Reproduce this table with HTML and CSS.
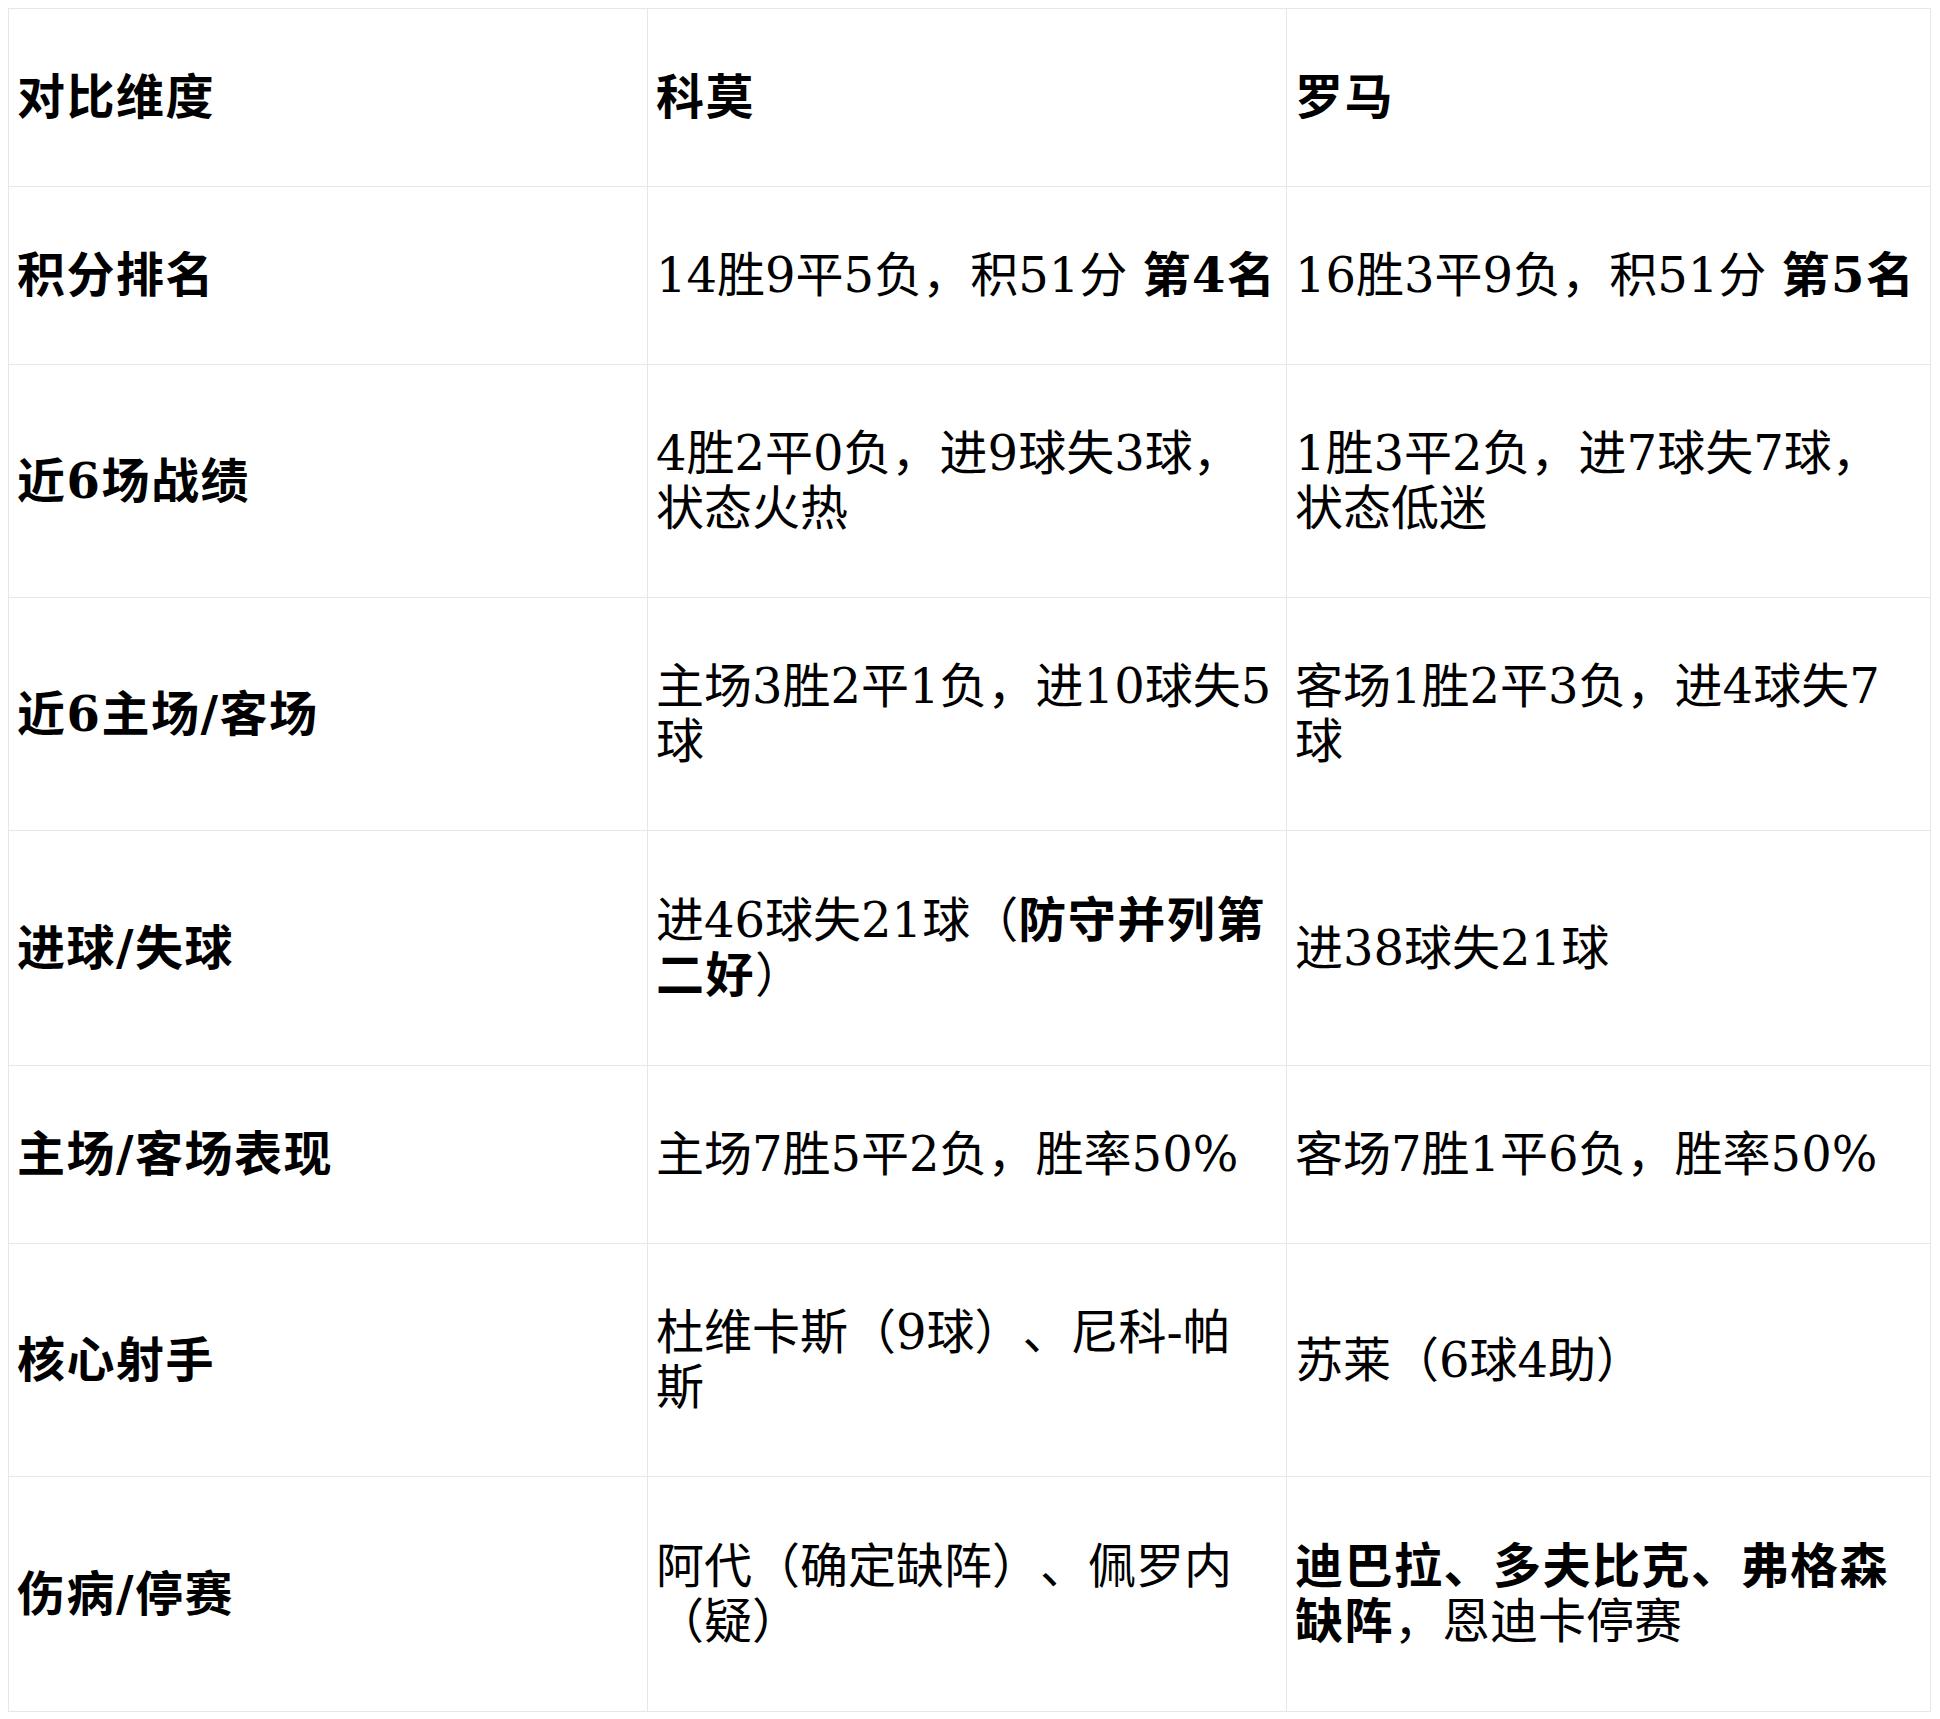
FILE: index.html
```html
<!DOCTYPE html>
<html lang="zh-CN">
<head>
<meta charset="utf-8">
<title>科莫 vs 罗马</title>
<link rel="stylesheet" href="styles.css">
</head>
<body>
<table class="cmp">
  <colgroup>
    <col class="c1">
    <col class="c2">
    <col class="c3">
  </colgroup>
  <thead>
    <tr><th>对比维度</th><th>科莫</th><th>罗马</th></tr>
  </thead>
  <tbody>
    <tr><th>积分排名</th><td>14胜9平5负，积51分 <strong>第4名</strong></td><td>16胜3平9负，积51分 <strong>第5名</strong></td></tr>
    <tr><th>近6场战绩</th><td>4胜2平0负，进9球失3球，状态火热</td><td>1胜3平2负，进7球失7球，状态低迷</td></tr>
    <tr><th>近6主场/客场</th><td>主场3胜2平1负，进10球失5球</td><td>客场1胜2平3负，进4球失7球</td></tr>
    <tr class="row-tall"><th>进球/失球</th><td>进46球失21球（<strong>防守并列第二好</strong>）</td><td>进38球失21球</td></tr>
    <tr><th>主场/客场表现</th><td>主场7胜5平2负，胜率50%</td><td>客场7胜1平6负，胜率50%</td></tr>
    <tr><th>核心射手</th><td>杜维卡斯（9球）、尼科-帕斯</td><td>苏莱（6球4助）</td></tr>
    <tr class="row-tall"><th>伤病/停赛</th><td>阿代（确定缺阵）、佩罗内（疑）</td><td><strong>迪巴拉、多夫比克、弗格森缺阵</strong>，恩迪卡停赛</td></tr>
  </tbody>
</table>
</body>
</html>
```

FILE: styles.css
```css
html, body {
  background: #ffffff;
}
body {
  margin: 8px;
  color: #000000;
  font-family: "DejaVu Serif", "Noto Sans CJK SC", serif;
  font-size: 48px;
  text-spacing-trim: space-all;
}
.cmp {
  width: 1923px;
  border-collapse: collapse;
  table-layout: fixed;
}
.cmp .c1 { width: 639px; }
.cmp .c2 { width: 639px; }
.cmp th,
.cmp td {
  border: 1px solid #e5e7eb;
  padding: 61px 8.5px 61px 8px;
  line-height: 55px;
  text-align: left;
  vertical-align: middle;
}
.cmp .row-tall th,
.cmp .row-tall td {
  padding-top: 62px;
  padding-bottom: 62px;
}
.cmp th,
.cmp strong {
  font-weight: 700;
  letter-spacing: 1.5px;
}
.cmp td {
  font-weight: 400;
}
```
